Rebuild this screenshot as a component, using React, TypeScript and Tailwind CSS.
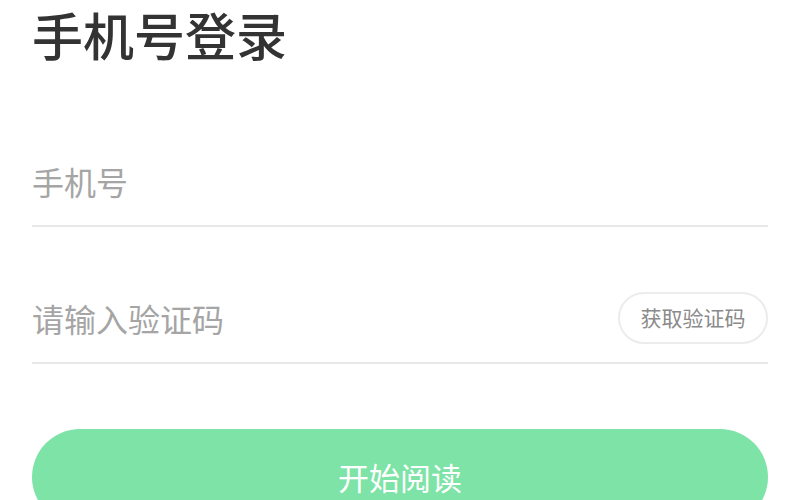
export default function App() {
  return (
    <div
      className="w-[800px] h-[500px] overflow-hidden bg-white px-8"
      style={{ fontFamily: '"Noto Sans CJK SC", "Noto Sans", sans-serif' }}
    >
      <h1 className="pt-[4px] h-[65px] text-[51px] leading-[1.2] font-medium text-[#333333]">
        手机号登录
      </h1>

      <div className="mt-[71px] h-[91px] flex items-center border-b-2 border-[#e8e8e8]">
        <input
          className="w-full bg-transparent text-[32px] text-[#333] placeholder:text-[#a5a5a5] outline-none"
          placeholder="手机号"
        />
      </div>

      <div className="mt-[46px] h-[91px] flex items-center justify-between border-b-2 border-[#e8e8e8]">
        <input
          className="flex-1 bg-transparent text-[32px] text-[#333] placeholder:text-[#a5a5a5] outline-none"
          placeholder="请输入验证码"
        />
        <button className="w-[150px] h-[52px] rounded-full border-2 border-[#ececec] text-[21px] text-[#8a8a8a]">
          获取验证码
        </button>
      </div>

      <button className="mt-[65px] w-full h-[96px] rounded-full bg-[#7ee3a6] text-white text-[31px]">
        开始阅读
      </button>
    </div>
  )
}
